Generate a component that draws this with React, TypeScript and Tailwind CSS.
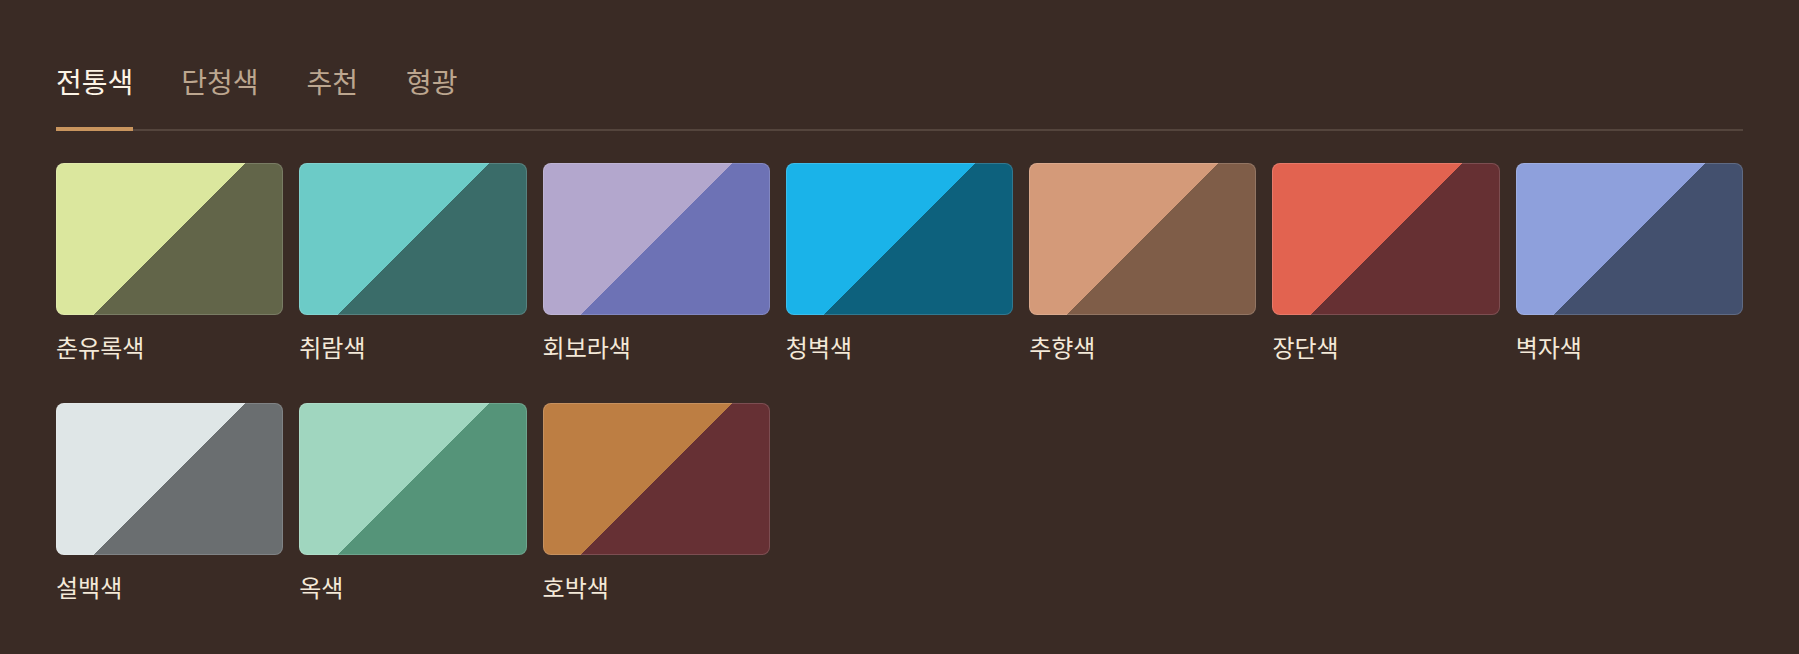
import React from 'react';

interface Swatch {
  name: string;
  bg: string;
}

const tabs = ['전통색', '단청색', '추천', '형광'];

// full class strings so tailwind picks them up
const swatches: Swatch[] = [
  { name: '춘유록색', bg: 'bg-[linear-gradient(135deg,#dbe79e_50%,#626549_50%)]' },
  { name: '취람색', bg: 'bg-[linear-gradient(135deg,#6ccbc7_50%,#3a6c69_50%)]' },
  { name: '회보라색', bg: 'bg-[linear-gradient(135deg,#b3a7cd_50%,#6d72b5_50%)]' },
  { name: '청벽색', bg: 'bg-[linear-gradient(135deg,#1ab3e9_50%,#0d617d_50%)]' },
  { name: '추향색', bg: 'bg-[linear-gradient(135deg,#d49a79_50%,#7f5d48_50%)]' },
  { name: '장단색', bg: 'bg-[linear-gradient(135deg,#e26350_50%,#663033_50%)]' },
  { name: '벽자색', bg: 'bg-[linear-gradient(135deg,#8ea0dc_50%,#43506e_50%)]' },
  { name: '설백색', bg: 'bg-[linear-gradient(135deg,#dfe6e7_50%,#6a6e70_50%)]' },
  { name: '옥색', bg: 'bg-[linear-gradient(135deg,#a0d6bf_50%,#559479_50%)]' },
  { name: '호박색', bg: 'bg-[linear-gradient(135deg,#bd7e43_50%,#663034_50%)]' },
];

const fontStack = "font-['Noto_Sans_CJK_KR','Noto_Sans',sans-serif]";

const SwatchCard: React.FC<{ swatch: Swatch }> = ({ swatch }) => (
  <div className="flex flex-col">
    <div
      className={`h-[152px] rounded-lg shadow-[inset_0_0_0_1px_rgba(255,255,255,0.15)] ${swatch.bg}`}
    />
    <div className="mt-[14px] text-[24px] leading-[36px] text-[#f4e9d8]">{swatch.name}</div>
  </div>
);

export default function App() {
  const active = 0;

  return (
    <div className={`min-h-screen bg-[#3a2b25] px-14 pt-[60px] pb-12 ${fontStack}`}>
      <div className="flex gap-12 border-b-2 border-[#54453d]">
        {tabs.map((tab, i) => (
          <button
            key={tab}
            className={`-mb-[2px] border-b-4 pb-[25px] text-[28px] leading-[42px] ${
              i === active ? 'border-[#c9955e] text-[#fdf4e6]' : 'border-transparent text-[#bca68f]'
            }`}
          >
            {tab}
          </button>
        ))}
      </div>

      <div className="mt-8 grid grid-cols-7 gap-x-4 gap-y-[38px]">
        {swatches.map((s) => (
          <SwatchCard key={s.name} swatch={s} />
        ))}
      </div>
    </div>
  );
}
